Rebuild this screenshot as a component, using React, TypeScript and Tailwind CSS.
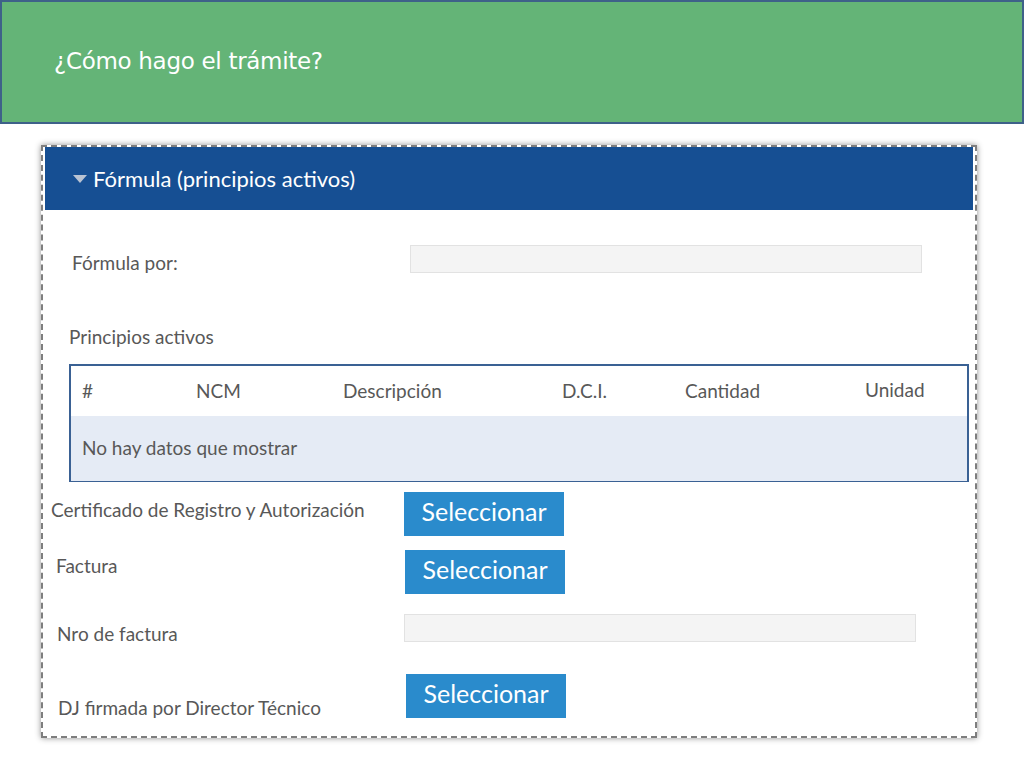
export default function App() {
  const cols = [
    { label: "#", w: "w-[114px]" },
    { label: "NCM", w: "w-[147px]" },
    { label: "Descripción", w: "w-[219px]" },
    { label: "D.C.I.", w: "w-[123px]" },
    { label: "Cantidad", w: "w-[180px]" },
  ];

  return (
    <div className="w-[1024px] h-[768px] bg-white overflow-hidden font-['Lato',sans-serif] text-[#585858]">
      {/* Slide title */}
      <div className="h-[124px] bg-[#64b477] border-2 border-[#3e6189] flex items-start pl-[52px] pt-[42px]">
        <h1 className="font-['DejaVu_Sans',sans-serif] text-[23px] leading-[34px] text-white tracking-[-0.3px]">
          ¿Cómo hago el trámite?
        </h1>
      </div>

      {/* Screenshot panel */}
      <div className="ml-[41px] mt-[21px] w-[936px] h-[593px] border-2 border-dashed border-[#7e7e7e] px-[2px] shadow-[0_0_6px_rgba(0,0,0,0.45)]">
        <div className="h-[63px] bg-[#164f93] flex items-center pl-[28px]">
          <svg width="14" height="8" viewBox="0 0 14 8" className="mr-[6px] mt-[1px]">
            <path d="M0 0 L14 0 L7 8 Z" fill="#b9c3d3" />
          </svg>
          <span className="text-white text-[22px]">Fórmula (principios activos)</span>
        </div>

        <div className="mt-[35px] h-[28px] flex items-center pl-[27px]">
          <span className="w-[338px] text-[19px] leading-[20px] mt-[8px]">Fórmula por:</span>
          <div className="w-[512px] h-[28px] bg-[#f4f4f4] border border-[#e2e2e2]" />
        </div>

        <div className="mt-[52px] pl-[24px] text-[19px] leading-[24px]">Principios activos</div>

        <div className="mt-[15px] ml-[24px] w-[900px] border-2 border-b border-[#3a6194]">
          <div className="h-[50px] flex items-center pl-[11px] bg-white">
            {cols.map((c) => (
              <span key={c.label} className={`${c.w} text-[19px]`}>
                {c.label}
              </span>
            ))}
            <span className="text-[19px] -mt-[2px]">Unidad</span>
          </div>
          <div className="h-[65px] bg-[#e5ebf5] flex items-center pl-[11px] text-[19px]">
            No hay datos que mostrar
          </div>
        </div>

        <div className="mt-[10px] flex items-center pl-[6px]">
          <span className="w-[353px] text-[19px] -mt-[8px]">Certificado de Registro y Autorización</span>
          <SelectButton />
        </div>

        <div className="mt-[14px] flex items-center pl-[11px]">
          <span className="w-[349px] text-[19px] -mt-[12px]">Factura</span>
          <SelectButton />
        </div>

        <div className="mt-[20px] h-[28px] flex items-center pl-[12px]">
          <span className="w-[347px] text-[19px] leading-[20px] mt-[12px]">Nro de factura</span>
          <div className="w-[512px] h-[28px] bg-[#f4f4f4] border border-[#e2e2e2]" />
        </div>

        <div className="mt-[32px] flex items-end pl-[13px]">
          <span className="w-[348px] text-[19px] -mb-[4px]">DJ firmada por Director Técnico</span>
          <SelectButton />
        </div>
      </div>
    </div>
  );
}

function SelectButton() {
  return (
    <button className="w-[160px] h-[44px] bg-[#2a8bcc] text-white text-[25px] leading-none pb-[6px]">
      Seleccionar
    </button>
  );
}
